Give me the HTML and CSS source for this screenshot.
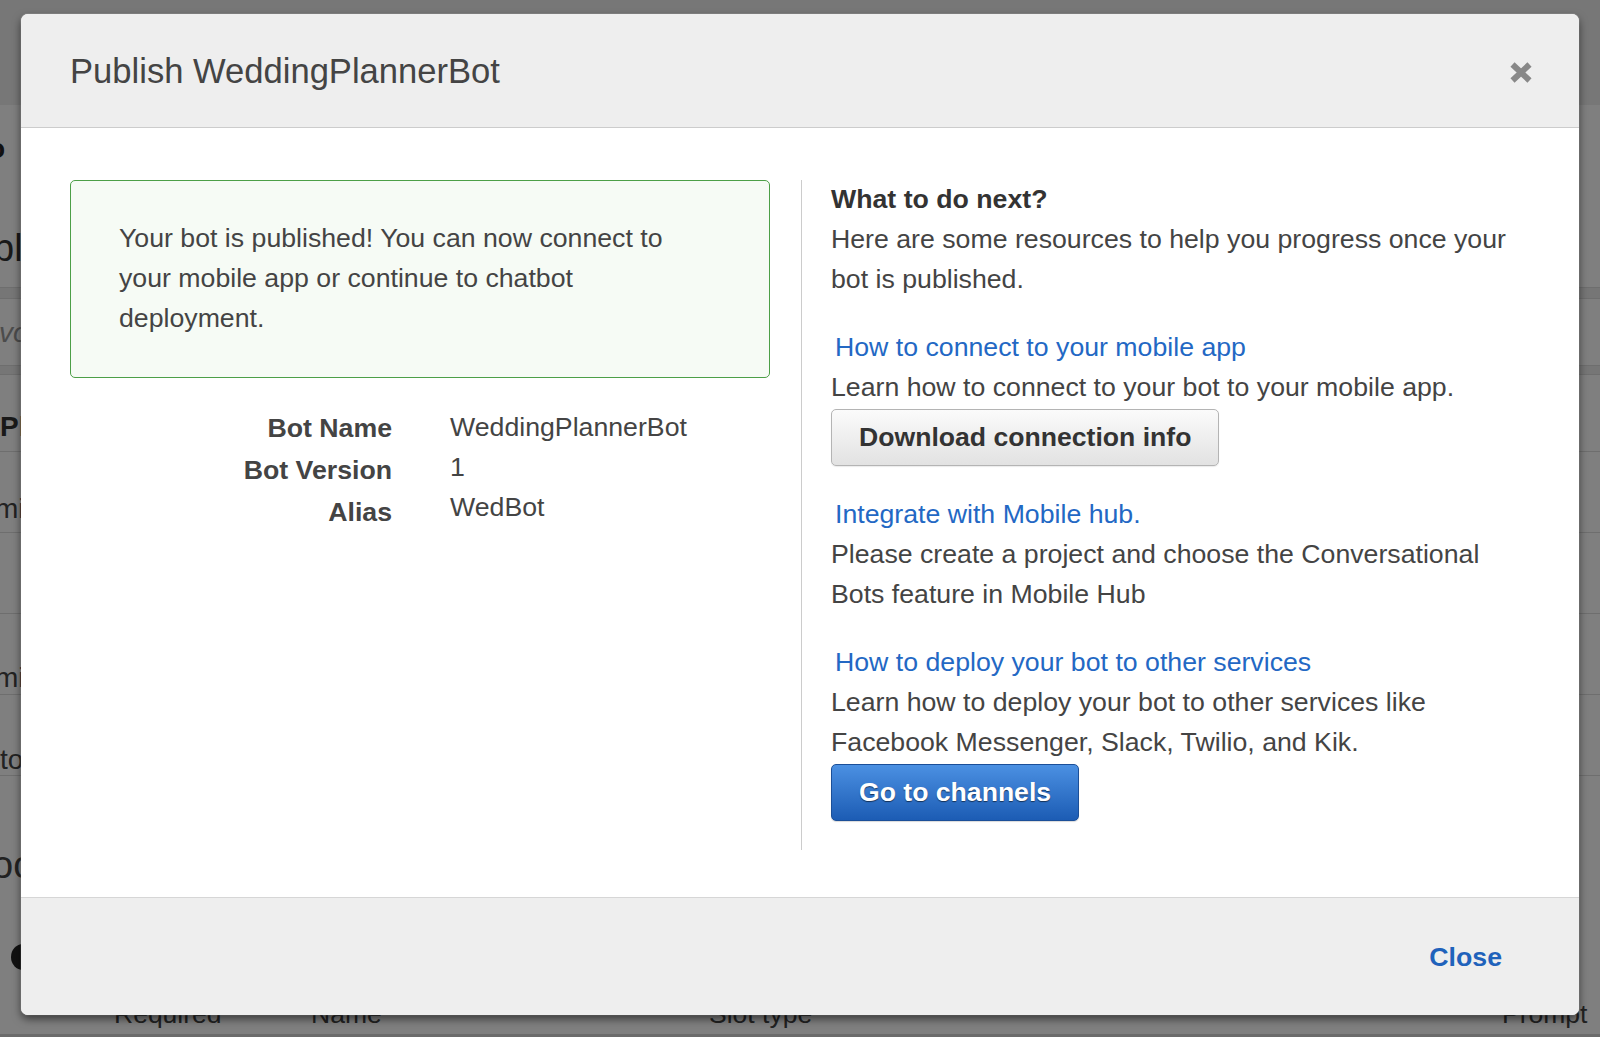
FILE: index.html
```html
<!DOCTYPE html>
<html lang="en">
<head>
<meta charset="utf-8">
<title>Publish WeddingPlannerBot</title>
<link rel="stylesheet" href="styles.css">
</head>
<body>
<div class="app">
  <div class="app-bar"></div>
  <div class="app-main">
    <div class="bg-row r1"><span class="frag frag-o">o</span></div>
    <div class="bg-row r2 line"><span class="frag frag-big">bl</span></div>
    <div class="bg-row band line"></div>
    <div class="bg-row r4 line"><span class="frag frag-italic">vo</span></div>
    <div class="bg-row band2 line"></div>
    <div class="bg-row r6 line"><span class="frag frag-pl">Pl</span></div>
    <div class="bg-row r7 line"><span class="frag frag-m">mi</span></div>
    <div class="bg-row r8 line"></div>
    <div class="bg-row r9 line"><span class="frag frag-m">mi</span></div>
    <div class="bg-row r10 line"><span class="frag frag-t">to</span></div>
    <div class="bg-row r11"><span class="frag frag-big2">oc</span></div>
    <div class="bg-row r12"><span class="frag-dot"></span></div>
    <div class="bg-table-head">
      <span class="th th-req">Required</span>
      <span class="th th-name">Name</span>
      <span class="th th-type">Slot type</span>
      <span class="th th-prompt">Prompt</span>
    </div>
  </div>
</div>
<div class="overlay"></div>

<div class="modal">
  <div class="modal-header">
    <h1 class="modal-title">Publish WeddingPlannerBot</h1>
    <span class="modal-x" aria-label="Close">
      <svg width="22" height="21" viewBox="0 0 22 21"><path d="M2.5 2.5 L19.5 18.5 M19.5 2.5 L2.5 18.5" stroke="#888" stroke-width="6" stroke-linecap="butt" fill="none"/></svg>
    </span>
  </div>
  <div class="modal-body">
    <div class="col-left">
      <div class="alert">Your bot is published! You can now connect to your mobile app or continue to chatbot deployment.</div>
      <div class="details">
        <div class="labels">
          <div>Bot Name</div>
          <div>Bot Version</div>
          <div>Alias</div>
        </div>
        <div class="values">
          <div>WeddingPlannerBot</div>
          <div>1</div>
          <div>WedBot</div>
        </div>
      </div>
    </div>
    <div class="col-right">
      <div class="next-title">What to do next?</div>
      <p class="para">Here are some resources to help you progress once your bot is published.</p>
      <div class="section">
        <a class="link">How to connect to your mobile app</a>
        <p class="para">Learn how to connect to your bot to your mobile app.</p>
        <button class="btn btn-default">Download connection info</button>
      </div>
      <div class="section">
        <a class="link">Integrate with Mobile hub.</a>
        <p class="para">Please create a project and choose the Conversational Bots feature in Mobile Hub</p>
      </div>
      <div class="section">
        <a class="link">How to deploy your bot to other services</a>
        <p class="para">Learn how to deploy your bot to other services like Facebook Messenger, Slack, Twilio, and Kik.</p>
        <button class="btn btn-primary">Go to channels</button>
      </div>
    </div>
  </div>
  <div class="modal-footer">
    <button class="btn-link">Close</button>
  </div>
</div>
</body>
</html>
```

FILE: styles.css
```css
* { box-sizing: border-box; }

html, body {
  margin: 0;
  padding: 0;
  width: 1600px;
  height: 1037px;
  overflow: hidden;
  font-family: "Liberation Sans", Arial, Helvetica, sans-serif;
  color: #444;
}

body { position: relative; }

/* ---------- background application ---------- */
.app {
  width: 1600px;
  height: 1037px;
  background: #fff;
  display: flex;
  flex-direction: column;
}
.app-bar {
  height: 105px;
  background: #eee;
  flex: none;
}
.app-main {
  flex: 1;
  display: flex;
  flex-direction: column;
}
.bg-row {
  flex: none;
  line-height: 40px;
  font-size: 28px;
  white-space: nowrap;
}
.line { border-bottom: 1px solid #ddd; }
.r1 { height: 88px; padding-top: 24px; }
.r2 { height: 95px; padding-top: 35px; }
.band { height: 11px; background: #ececec; }
.r4 { height: 67px; padding-top: 14px; }
.band2 { height: 9px; background: #ececec; }
.r6 { height: 77px; padding-top: 32px; }
.r7 { height: 81px; padding-top: 37px; }
.r8 { height: 81px; }
.r9 { height: 81px; padding-top: 44px; }
.r10 { height: 81px; padding-top: 45px; }
.r11 { height: 140px; padding-top: 69px; }
.r12 { height: 78px; padding-top: 21px; }

.frag { display: inline-block; color: #444; }
.frag-o { font-weight: bold; margin-left: -12px; font-size: 28px; color: #222; }
.frag-big { font-size: 38px; margin-left: -7px; color: #333; }
.frag-italic { font-style: italic; color: #999; margin-left: -1px; }
.frag-pl { font-weight: bold; color: #333; }
.frag-m { margin-left: -5px; }
.frag-big2 { font-size: 38px; margin-left: -8px; }
.frag-dot {
  display: block;
  width: 24px;
  height: 26px;
  border-radius: 50%;
  background: #222;
  margin-left: 11px;
  margin-top: 7px;
}

.bg-table-head {
  height: 43px;
  display: flex;
  line-height: 40px;
  font-size: 26.5px;
  color: #444;
  border-bottom: 3px solid #d6d6d6;
  padding-left: 114px;
  white-space: nowrap;
}
.th-req { width: 197px; }
.th-name { width: 398px; }
.th-type { width: 793px; }

.overlay {
  position: absolute;
  inset: 0;
  background: rgba(0, 0, 0, 0.5);
}

/* ---------- modal ---------- */
.modal {
  position: absolute;
  left: 21px;
  top: 14px;
  width: 1558px;
  height: 1001px;
  background: #fff;
  border-radius: 7px;
  box-shadow: 0 4px 9px rgba(0, 0, 0, 0.55), 0 0 0 1px rgba(255, 255, 255, 0.12);
  display: flex;
  flex-direction: column;
  overflow: hidden;
  font-size: 26.7px;
}

.modal-header {
  height: 114px;
  flex: none;
  background: #eee;
  border-bottom: 1px solid #ccc;
  display: flex;
  align-items: center;
  justify-content: space-between;
  padding: 0 47px 0 49px;
}
.modal-title {
  margin: 0;
  font-size: 34.6px;
  font-weight: normal;
  color: #444;
  margin-top: 2px;
}
.modal-x {
  display: flex;
  width: 22px;
  height: 21px;
  margin-top: 4px;
}

.modal-body {
  flex: 1;
  display: flex;
  align-items: flex-start;
  padding: 52px 49px 0 49px;
}

.col-left {
  width: 700px;
  flex: none;
}

.alert {
  border: 1px solid #4c9f47;
  background: #f6fbf5;
  border-radius: 5px;
  padding: 37px 80px 39px 48px;
  line-height: 40px;
  color: #444;
}

.details {
  display: flex;
  margin-top: 29px;
}
.labels {
  width: 322px;
  text-align: right;
  font-weight: bold;
  line-height: 42px;
  color: #444;
}
.values {
  margin-left: 58px;
  line-height: 40px;
  color: #444;
}

.col-right {
  flex: 1;
  margin-left: 31px;
  border-left: 1px solid #ccc;
  padding-left: 29px;
  padding-bottom: 29px;
}

.next-title {
  font-weight: bold;
  line-height: 39px;
  color: #333;
}
.para {
  margin: 0;
  line-height: 40px;
  color: #444;
}
.section { margin-top: 28px; }
.link {
  display: block;
  padding-left: 4px;
  line-height: 40px;
  color: #2368c4;
  cursor: pointer;
}

.btn {
  display: block;
  height: 57px;
  margin-top: 2px;
  padding: 0 27px;
  font-family: inherit;
  font-size: 26.6px;
  font-weight: bold;
  border-radius: 5px;
  cursor: pointer;
}
.btn-default {
  background: linear-gradient(#fbfbfb, #e2e2e2);
  border: 1px solid #b4b4b4;
  color: #333;
  box-shadow: 0 1px 1px rgba(0, 0, 0, 0.08);
}
.btn-primary {
  background: linear-gradient(#4b90e2, #1c5cb4);
  border: 1px solid #1b4f98;
  color: #fff;
  text-shadow: 0 1px 1px rgba(0, 0, 0, 0.55);
  box-shadow: 0 1px 1px rgba(0, 0, 0, 0.15);
}

.modal-footer {
  height: 118px;
  flex: none;
  background: #eee;
  border-top: 1px solid #d6d6d6;
  display: flex;
  align-items: center;
  justify-content: flex-end;
  padding: 2px 49px 0 0;
}
.btn-link {
  background: none;
  border: none;
  padding: 0 28px;
  font-family: inherit;
  font-size: 26.7px;
  font-weight: bold;
  color: #1f62bb;
  cursor: pointer;
}
```
